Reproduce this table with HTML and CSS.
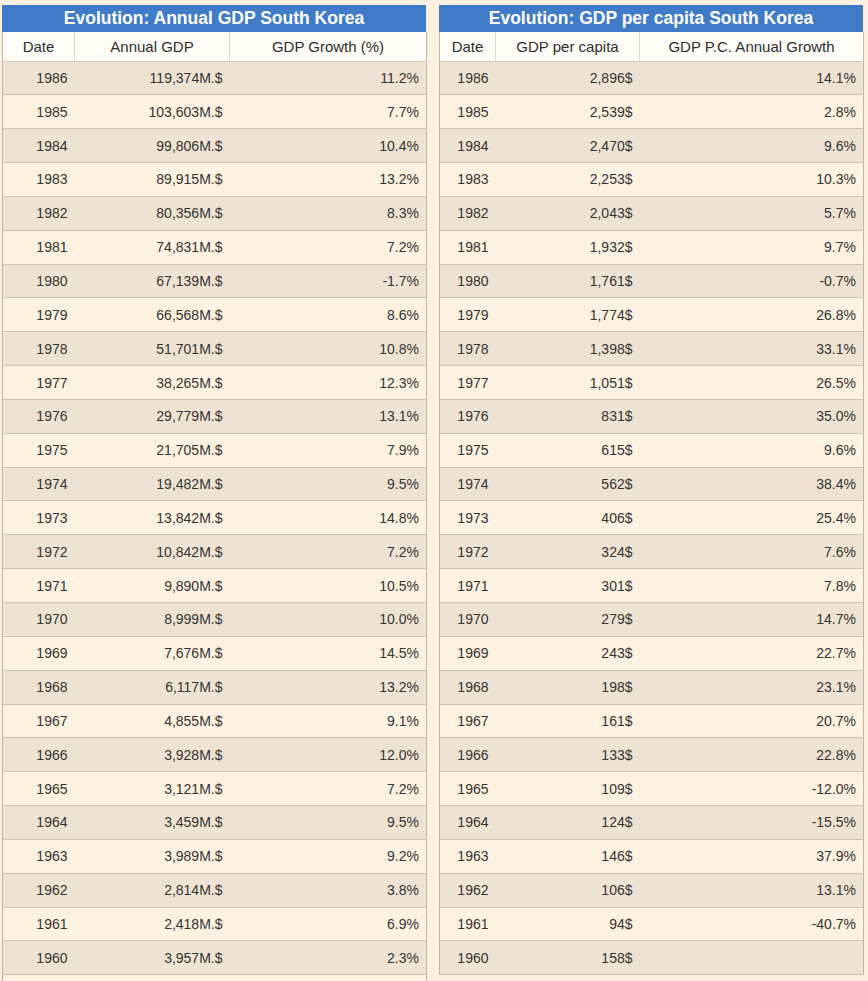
FILE: index.html
```html
<!DOCTYPE html>
<html>
<head>
<meta charset="utf-8">
<link rel="stylesheet" href="styles.css">
</head>
<body>
<div class="page">
  <section class="panel panel-left">
    <div class="title">Evolution: Annual GDP South Korea</div>
    <table class="data">
      <colgroup><col class="c1"><col class="c2"><col class="c3"></colgroup>
      <thead><tr><th>Date</th><th>Annual GDP</th><th>GDP Growth (%)</th></tr></thead>
      <tbody>
        <tr><td>1986</td><td>119,374M.$</td><td>11.2%</td></tr>
        <tr><td>1985</td><td>103,603M.$</td><td>7.7%</td></tr>
        <tr><td>1984</td><td>99,806M.$</td><td>10.4%</td></tr>
        <tr><td>1983</td><td>89,915M.$</td><td>13.2%</td></tr>
        <tr><td>1982</td><td>80,356M.$</td><td>8.3%</td></tr>
        <tr><td>1981</td><td>74,831M.$</td><td>7.2%</td></tr>
        <tr><td>1980</td><td>67,139M.$</td><td>-1.7%</td></tr>
        <tr><td>1979</td><td>66,568M.$</td><td>8.6%</td></tr>
        <tr><td>1978</td><td>51,701M.$</td><td>10.8%</td></tr>
        <tr><td>1977</td><td>38,265M.$</td><td>12.3%</td></tr>
        <tr><td>1976</td><td>29,779M.$</td><td>13.1%</td></tr>
        <tr><td>1975</td><td>21,705M.$</td><td>7.9%</td></tr>
        <tr><td>1974</td><td>19,482M.$</td><td>9.5%</td></tr>
        <tr><td>1973</td><td>13,842M.$</td><td>14.8%</td></tr>
        <tr><td>1972</td><td>10,842M.$</td><td>7.2%</td></tr>
        <tr><td>1971</td><td>9,890M.$</td><td>10.5%</td></tr>
        <tr><td>1970</td><td>8,999M.$</td><td>10.0%</td></tr>
        <tr><td>1969</td><td>7,676M.$</td><td>14.5%</td></tr>
        <tr><td>1968</td><td>6,117M.$</td><td>13.2%</td></tr>
        <tr><td>1967</td><td>4,855M.$</td><td>9.1%</td></tr>
        <tr><td>1966</td><td>3,928M.$</td><td>12.0%</td></tr>
        <tr><td>1965</td><td>3,121M.$</td><td>7.2%</td></tr>
        <tr><td>1964</td><td>3,459M.$</td><td>9.5%</td></tr>
        <tr><td>1963</td><td>3,989M.$</td><td>9.2%</td></tr>
        <tr><td>1962</td><td>2,814M.$</td><td>3.8%</td></tr>
        <tr><td>1961</td><td>2,418M.$</td><td>6.9%</td></tr>
        <tr><td>1960</td><td>3,957M.$</td><td>2.3%</td></tr>
        <tr><td></td><td></td><td></td></tr>
      </tbody>
    </table>
  </section>
  <section class="panel panel-right">
    <div class="title">Evolution: GDP per capita South Korea</div>
    <table class="data">
      <colgroup><col class="d1"><col class="d2"><col class="d3"></colgroup>
      <thead><tr><th>Date</th><th>GDP per capita</th><th>GDP P.C. Annual Growth</th></tr></thead>
      <tbody>
        <tr><td>1986</td><td>2,896$</td><td>14.1%</td></tr>
        <tr><td>1985</td><td>2,539$</td><td>2.8%</td></tr>
        <tr><td>1984</td><td>2,470$</td><td>9.6%</td></tr>
        <tr><td>1983</td><td>2,253$</td><td>10.3%</td></tr>
        <tr><td>1982</td><td>2,043$</td><td>5.7%</td></tr>
        <tr><td>1981</td><td>1,932$</td><td>9.7%</td></tr>
        <tr><td>1980</td><td>1,761$</td><td>-0.7%</td></tr>
        <tr><td>1979</td><td>1,774$</td><td>26.8%</td></tr>
        <tr><td>1978</td><td>1,398$</td><td>33.1%</td></tr>
        <tr><td>1977</td><td>1,051$</td><td>26.5%</td></tr>
        <tr><td>1976</td><td>831$</td><td>35.0%</td></tr>
        <tr><td>1975</td><td>615$</td><td>9.6%</td></tr>
        <tr><td>1974</td><td>562$</td><td>38.4%</td></tr>
        <tr><td>1973</td><td>406$</td><td>25.4%</td></tr>
        <tr><td>1972</td><td>324$</td><td>7.6%</td></tr>
        <tr><td>1971</td><td>301$</td><td>7.8%</td></tr>
        <tr><td>1970</td><td>279$</td><td>14.7%</td></tr>
        <tr><td>1969</td><td>243$</td><td>22.7%</td></tr>
        <tr><td>1968</td><td>198$</td><td>23.1%</td></tr>
        <tr><td>1967</td><td>161$</td><td>20.7%</td></tr>
        <tr><td>1966</td><td>133$</td><td>22.8%</td></tr>
        <tr><td>1965</td><td>109$</td><td>-12.0%</td></tr>
        <tr><td>1964</td><td>124$</td><td>-15.5%</td></tr>
        <tr><td>1963</td><td>146$</td><td>37.9%</td></tr>
        <tr><td>1962</td><td>106$</td><td>13.1%</td></tr>
        <tr><td>1961</td><td>94$</td><td>-40.7%</td></tr>
        <tr><td>1960</td><td>158$</td><td></td></tr>
      </tbody>
    </table>
  </section>
</div>
</body>
</html>
```

FILE: styles.css
```css
html, body {
  margin: 0;
  padding: 0;
  background: #fbf0df;
}
body {
  font-family: "Liberation Sans", Arial, sans-serif;
  color: #333;
  font-size: 14px;
}
.page {
  display: flex;
  gap: 13px;
  padding: 5px 0 0 2px;
  height: 976px;
  overflow: hidden;
}
.panel {
  width: 424px;
  flex: none;
}
.title {
  background: #3f7bc6;
  color: #fff;
  font-weight: bold;
  font-size: 17.5px;
  text-align: center;
  height: 27px;
  line-height: 27px;
}
.data {
  width: 424px;
  table-layout: fixed;
  border-collapse: collapse;
  border-left: 1px solid #c2b6a3;
  border-right: 1px solid #c2b6a3;
}
.c1 { width: 72px; }
.c2 { width: 155px; }
.c3 { width: 197px; }
.d1 { width: 56px; }
.d2 { width: 144px; }
.d3 { width: 224px; }
.data th {
  background: #fffdf7;
  font-weight: normal;
  font-size: 15px;
  color: #2e2e2e;
  height: 29px;
  padding: 0;
  text-align: center;
  border-right: 1px solid #e2d8c8;
  border-bottom: 1px solid #d6cab8;
  box-sizing: border-box;
}
.data th:last-child { border-right: none; }
.data td {
  height: 33.85px;
  padding: 0 7px 0 0;
  text-align: right;
  border-bottom: 1px solid #cfc3b0;
  box-sizing: border-box;
}
.data tbody tr:nth-child(odd) { background: #eee3d2; }
.data tbody tr:nth-child(even) { background: #fdf1e0; }
```
